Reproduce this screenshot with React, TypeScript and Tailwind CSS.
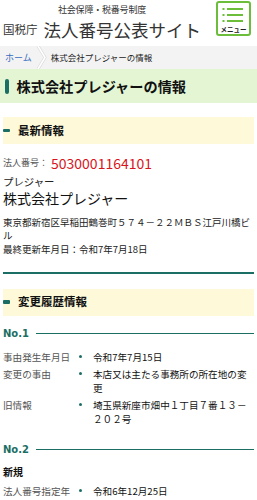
import React from "react";

const teal = "bg-[#1b6e63]";

const SectionHead = ({ title }: { title: string }) => (
  <div className="mx-[3px] h-[27px] bg-[#fdf9d9] flex items-center">
    <span className={`w-[7px] h-[3.5px] rounded-[1px] ${teal}`} />
    <h2 className="ml-[8px] text-[11.5px] font-bold text-[#111] leading-none">{title}</h2>
  </div>
);

const NoHead = ({ no, className }: { no: string; className?: string }) => (
  <div className={`mx-[3px] h-[14px] flex items-center ${className ?? ""}`}>
    <span className="text-[10px] font-bold text-[#1b6e63] leading-none" style={{ fontFamily: "'DejaVu Sans', 'Noto Sans CJK JP', sans-serif" }}>
      {no}
    </span>
    <span className={`ml-[7px] flex-1 h-[1.5px] ${teal}`} />
  </div>
);

const Row = ({ label, value, className }: { label: string; value: string; className?: string }) => (
  <div className={`mx-[3px] grid grid-cols-[75px_15px_1fr] text-[9.6px] leading-[14px] ${className ?? ""}`}>
    <div className="text-[#555]">{label}</div>
    <div className="h-[14px] flex items-center">
      <span className={`ml-[1px] w-[3px] h-[3px] rounded-full ${teal}`} />
    </div>
    <div className="text-[#111]">{value}</div>
  </div>
);

export default function App() {
  return (
    <div className="w-[257px] min-h-[500px] bg-white text-[#222]" style={{ fontFamily: "'Noto Sans CJK JP', sans-serif" }}>
      {/* header */}
      <header className="h-[46px] flex justify-between">
        <div className="pt-[4px]">
          <div className="pl-[58px] text-[9px] leading-[12px] text-[#333] tracking-[-0.2px]">社会保障・税番号制度</div>
          <div className="mt-[1px] flex items-center h-[26px] pl-[3px] text-[#333]">
            <span className="text-[11.5px] leading-none">国税庁</span>
            <span className="ml-[6px] text-[17.5px] leading-none">法人番号公表サイト</span>
          </div>
        </div>
        <button className="mt-[1px] mr-[6px] w-[35px] h-[35px] border-2 border-[#6cbd3a] rounded-[3px] bg-white flex flex-col items-center">
          <svg width="31" height="20" viewBox="0 0 31 20" className="mt-[2px]">
            {[4, 10, 16].map((y) => (
              <g key={y}>
                <rect x="4.5" y={y - 1} width="2" height="2" fill="#6cbd3a" />
                <rect x="9" y={y - 1} width="16" height="2" fill="#6cbd3a" />
              </g>
            ))}
          </svg>
          <span className="text-[6.5px] leading-none font-bold text-[#222] mt-[1px]">メニュー</span>
        </button>
      </header>

      {/* breadcrumb */}
      <nav className="h-[23px] bg-[#f3f3f3] flex items-center text-[9px]">
        <span className="pl-[5px] text-[#3a6cc0]">ホーム</span>
        <svg width="12" height="23" viewBox="0 0 12 23" className="ml-[4px]">
          <polyline points="2,0 9,11.5 2,23" fill="none" stroke="#dcdcdc" strokeWidth="3" />
          <polyline points="2,0 9,11.5 2,23" fill="none" stroke="#ffffff" strokeWidth="1.5" />
        </svg>
        <span className="ml-[3px] text-[#222] text-[8.5px]">株式会社プレジャーの情報</span>
      </nav>

      {/* title */}
      <div className="h-[34px] bg-[#e4f5d4] flex items-center">
        <span className="ml-[5px] w-[3.5px] h-[15px] rounded-full bg-[#1b6e63]" />
        <h1 className="ml-[8px] text-[14.2px] font-bold text-[#111] leading-none">株式会社プレジャーの情報</h1>
      </div>

      <div className="mt-[14px]">
        <SectionHead title="最新情報" />
      </div>

      <div className="mx-[3px]">
        <div className="mt-[10px] h-[18px] flex items-center">
          <span className="text-[9px] text-[#555]">法人番号：</span>
          <span className="ml-[3px] text-[14px] text-[#d9141c] leading-none">5030001164101</span>
        </div>
        <div className="mt-[3px] text-[10.4px] leading-[14px] text-[#222]">プレジャー</div>
        <div className="text-[14px] leading-[18px] text-[#111]">株式会社プレジャー</div>
        <div className="mt-[9px] text-[9.5px] leading-[13px] text-[#222]">
          東京都新宿区早稲田鶴巻町５７４－２２ＭＢＳ江戸川橋ビ<br />ル
        </div>
        <div className="mt-[1px] text-[9.5px] leading-[13px] text-[#222]">最終更新年月日：令和7年7月18日</div>
        <div className={`mt-[16px] h-[1.5px] ${teal}`} />
      </div>

      <div className="mt-[15px]">
        <SectionHead title="変更履歴情報" />
      </div>

      <NoHead no="No.1" className="mt-[11px]" />
      <Row className="mt-[9px]" label="事由発生年月日" value="令和7年7月15日" />
      <Row className="mt-[3px]" label="変更の事由" value="本店又は主たる事務所の所在地の変更" />
      <Row className="mt-[3px]" label="旧情報" value="埼玉県新座市畑中１丁目７番１３－２０２号" />

      <NoHead no="No.2" className="mt-[17px]" />
      <div className="mx-[3px] mt-[8px] text-[10px] leading-[14px] font-bold text-[#111]">新規</div>
      <Row className="mt-[5px]" label="法人番号指定年" value="令和6年12月25日" />
    </div>
  );
}
